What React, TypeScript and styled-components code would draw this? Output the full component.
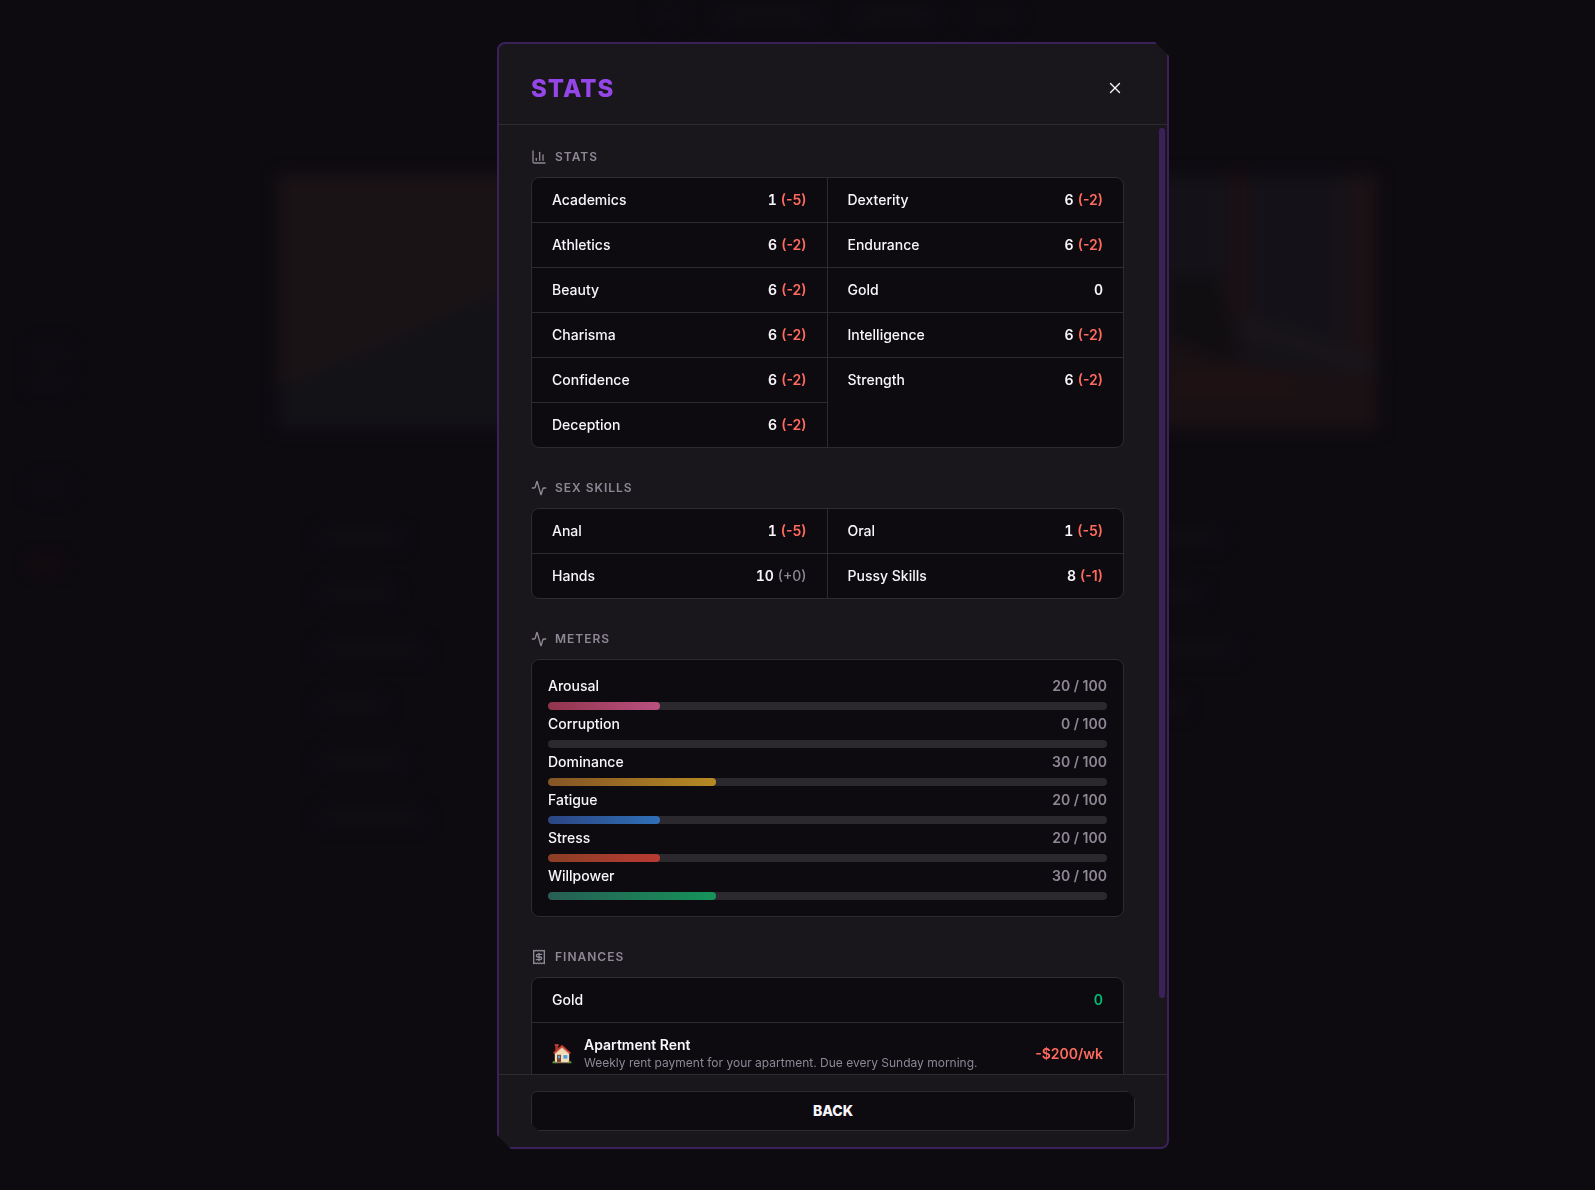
import React, { useEffect, useRef, useState } from 'react';
import type { ReactNode } from 'react';
import styled, { createGlobalStyle } from 'styled-components';
import { Activity, ChartColumn, X } from 'lucide-react';

const color = {
  page: '#0d0a10',
  surface: '#1a171c',
  inset: '#0d0a10',
  line: '#2d2a30',
  frame: '#3b2159',
  accent: '#9446e8',
  text: '#f8f6fa',
  muted: '#8e8895',
  bad: '#ff6b5e',
  good: '#00bf75',
  track: '#2b282e',
};

const GlobalStyle = createGlobalStyle`
  *, *::before, *::after { box-sizing: border-box; }
  html, body, #root { height: 100%; }
  body {
    margin: 0;
    overflow: hidden;
    background: ${color.page};
    color: ${color.text};
    font-family: Inter, "Liberation Sans", sans-serif;
    font-size: 14px;
    line-height: 20px;
  }
  h1, h2, p, ul { margin: 0; padding: 0; }
  ul { list-style: none; }
`;

/* ---------- blurred page behind the dialog ---------- */

const Backdrop = styled.div`
  position: fixed;
  inset: 0;
  display: grid;
  grid-template-columns: 278px minmax(0, 1fr) 217px;
  grid-template-rows: 174px minmax(0, 1fr);
  overflow: hidden;
  filter: blur(8px);
`;

const TopBar = styled.div`
  grid-column: 1 / -1;
  display: flex;
  justify-content: center;
  gap: 32px;
  padding: 8px 0 0 76px;
`;

const SideRail = styled.div`
  display: flex;
  flex-direction: column;
  gap: 16px;
  padding: 170px 0 0 28px;
`;

const RailGap = styled.div<{ $h: number }>`
  height: ${(p) => p.$h}px;
`;

const MainColumn = styled.div`
  display: flex;
  flex-direction: column;
`;

const Hero = styled.svg`
  display: block;
  width: 100%;
  height: 256px;
`;

const Choices = styled.div`
  display: flex;
  flex-direction: column;
  gap: 41px;
  padding: 100px 40px 0;
`;

const Smudge = styled.div<{ $w: number; $tone?: string }>`
  width: ${(p) => p.$w}px;
  height: 15px;
  border-radius: 8px;
  background: ${(p) => p.$tone ?? '#110f14'};
`;

const ChoicePair = styled.div`
  display: grid;
  grid-template-columns: 500px 1fr;
  gap: 16px;
`;

/* ---------- dialog ---------- */

const Overlay = styled.div`
  position: fixed;
  inset: 0;
  display: flex;
  align-items: center;
  justify-content: center;
  padding: 42px 0 41px 71px;
`;

const Dialog = styled.section`
  display: flex;
  flex-direction: column;
  width: 100%;
  max-width: 672px;
  max-height: 100%;
  border: 2px solid ${color.frame};
  border-radius: 8px;
  background: ${color.surface};
  overflow: hidden;
  clip-path: polygon(0 0, calc(100% - 14px) 0, 100% 14px, 100% 100%, 14px 100%, 0 calc(100% - 14px));
`;

const Header = styled.header`
  display: flex;
  align-items: center;
  justify-content: space-between;
  padding: 24px 32px 16px;
  border-bottom: 1px solid ${color.line};
`;

const Title = styled.h1`
  padding-top: 2px;
  color: ${color.accent};
  font-size: 24px;
  line-height: 32px;
  font-weight: 800;
  letter-spacing: 1px;
`;

const CloseButton = styled.button`
  display: grid;
  place-items: center;
  width: 40px;
  height: 40px;
  padding: 0;
  border: 0;
  background: none;
  color: ${color.text};
  cursor: pointer;
`;

const Body = styled.div`
  display: grid;
  grid-template-columns: minmax(0, 1fr) 10px;
  flex: 1 1 auto;
  min-height: 0;
`;

const Scroller = styled.div`
  display: flex;
  flex-direction: column;
  gap: 32px;
  min-height: 0;
  padding: 24px 33px 68px 32px;
  overflow-y: auto;
  scrollbar-width: none;
  & > * { flex-shrink: 0; }
`;

const ScrollTrack = styled.div`
  padding: 3px 2px;
`;

const ScrollThumb = styled.div`
  width: 6px;
  border-radius: 3px;
  background: ${color.frame};
`;

const Group = styled.section`
  display: flex;
  flex-direction: column;
  gap: 12px;
`;

const GroupTitle = styled.h2`
  display: flex;
  align-items: center;
  gap: 8px;
  color: ${color.muted};
  font-size: 12px;
  line-height: 16px;
  font-weight: 600;
  letter-spacing: 1px;
  text-transform: uppercase;
`;

const Card = styled.div`
  border: 1px solid ${color.line};
  border-radius: 8px;
  background: ${color.inset};
  overflow: hidden;
`;

const Columns = styled(Card)`
  display: grid;
  grid-template-columns: 1fr 1fr;
`;

const Column = styled.ul`
  &:not(:last-child) { border-right: 1px solid ${color.line}; }
`;

const Row = styled.li`
  display: flex;
  align-items: center;
  justify-content: space-between;
  padding: 12px 20px;
  & + & { border-top: 1px solid ${color.line}; }
`;

const Label = styled.span`
  font-size: 14px;
  font-weight: 500;
`;

const Value = styled.span<{ $tone?: string }>`
  display: flex;
  gap: 4px;
  font-weight: 600;
  color: ${(p) => p.$tone ?? color.text};
`;

const Score = styled.span`
  font-variant-numeric: tabular-nums;
`;

const Modifier = styled.span<{ $negative: boolean }>`
  font-weight: ${(p) => (p.$negative ? 600 : 500)};
  color: ${(p) => (p.$negative ? color.bad : color.muted)};
`;

const MeterCard = styled(Card)`
  display: flex;
  flex-direction: column;
  gap: 4px;
  padding: 16px;
`;

const MeterItem = styled.div`
  display: flex;
  flex-direction: column;
  gap: 6px;
`;

const MeterHead = styled.div`
  display: flex;
  justify-content: space-between;
`;

const MeterTrack = styled.div`
  height: 8px;
  border-radius: 4px;
  background: ${color.track};
  overflow: hidden;
`;

const MeterFill = styled.div<{ $from: string; $to: string }>`
  height: 100%;
  border-radius: 4px;
  background: linear-gradient(to right, ${(p) => p.$from}, ${(p) => p.$to});
`;

const Expense = styled.div`
  display: flex;
  align-items: center;
  gap: 12px;
`;

const ExpenseText = styled.div`
  display: flex;
  flex-direction: column;
`;

const ExpenseName = styled.span`
  font-weight: 600;
`;

const ExpenseNote = styled.span`
  padding-bottom: 2px;
  color: ${color.muted};
  font-size: 12px;
  line-height: 16px;
`;

const Footer = styled.footer`
  padding: 16px 32px;
  border-top: 1px solid ${color.line};
`;

const BackButton = styled.button`
  display: block;
  width: 100%;
  height: 40px;
  padding: 0;
  border: 1px solid ${color.line};
  border-radius: 6px;
  background: ${color.inset};
  color: ${color.text};
  font: inherit;
  font-weight: 800;
  cursor: pointer;
  clip-path: polygon(0 0, calc(100% - 8px) 0, 100% 8px, 100% 100%, 8px 100%, 0 calc(100% - 8px));
`;

/* ---------- drawings ---------- */

const ReceiptIcon = () => (
  <svg width="16" height="16" viewBox="0 0 24 24" fill="none" stroke="currentColor" strokeWidth="2" strokeLinecap="round" strokeLinejoin="round" aria-hidden="true">
    <path d="M4 2v20l2-1 2 1 2-1 2 1 2-1 2 1 2-1 2 1V2l-2 1-2-1-2 1-2-1-2 1-2-1-2 1Z" />
    <path d="M16 8h-6a2 2 0 1 0 0 4h4a2 2 0 1 1 0 4H8" />
    <path d="M12 17.5v-11" />
  </svg>
);

const HouseIcon = () => (
  <svg width="20" height="20" viewBox="0 0 20 20" role="img" aria-label="House">
    <path d="M3.2 0.6h3v6h-3z" fill="#a8352a" />
    <path d="M2.7 0.3h4v1.4h-4z" fill="#cf4a38" />
    <path d="M2.8 9 10 2.4 17.2 9v9.6H2.8z" fill="#f3ddb8" />
    <path d="M2.8 9.2 10 3l7.2 6.2v1.5L10 4.8 2.8 10.7z" fill="#c9a98a" opacity=".6" />
    <path d="M10 0.7 19 8.7l-1.2 1.4L10 3.3 2.2 10.1 1 8.7z" fill="#c93a2c" />
    <path d="M5 10.8h4v7.8H5z" fill="#7b4530" />
    <path d="M6 11.8h2v2.4H6z" fill="#5ba3d6" />
    <path d="M10.8 10.6h5.2v4.6h-5.2z" fill="#fff3df" />
    <path d="M11.3 11.1h4.2v3.6h-4.2z" fill="#4e9fe0" />
    <path d="M0.3 19.2c0-2 1.5-2.6 2.7-1.9 1 .5 1.3 1.2 1.2 1.9zM15.8 19.2c-.1-1 .5-1.7 1.4-2 1.3-.4 2.6.4 2.5 2z" fill="#5d8f35" />
    <path d="M3 18.3h14v.9H3z" fill="#9c8a6a" />
  </svg>
);

const HeroArt = () => (
  <Hero viewBox="0 0 1100 256" preserveAspectRatio="none" aria-hidden="true">
    <rect width="1100" height="256" fill="#141218" />
    <path d="M0 0h320v70L0 220z" fill="#1a1316" />
    <path d="M0 214 230 114v142H0z" fill="#131217" />
    <path d="M948 0h22v180h-22z" fill="#1a1014" />
    <path d="M1066 0h34v256h-34z" fill="#1a1215" />
    <path d="M890 100h50l20 60v30h-70z" fill="#110e12" />
    <path d="M880 160l60 30 160 10v56H880z" fill="#191114" />
    <path d="M890 200l70-10 60 14v20H890z" fill="#1e1113" />
    <path d="M960 140l140 44v20l-140-42z" fill="#19151a" />
  </Hero>
);

/* ---------- data ---------- */

type Stat = { name: string; value: number; mod?: number };
type Meter = { name: string; value: number; from: string; to: string };

const statColumns: Stat[][] = [
  [
    { name: 'Academics', value: 1, mod: -5 },
    { name: 'Athletics', value: 6, mod: -2 },
    { name: 'Beauty', value: 6, mod: -2 },
    { name: 'Charisma', value: 6, mod: -2 },
    { name: 'Confidence', value: 6, mod: -2 },
    { name: 'Deception', value: 6, mod: -2 },
  ],
  [
    { name: 'Dexterity', value: 6, mod: -2 },
    { name: 'Endurance', value: 6, mod: -2 },
    { name: 'Gold', value: 0 },
    { name: 'Intelligence', value: 6, mod: -2 },
    { name: 'Strength', value: 6, mod: -2 },
  ],
];

const skillColumns: Stat[][] = [
  [
    { name: 'Anal', value: 1, mod: -5 },
    { name: 'Hands', value: 10, mod: 0 },
  ],
  [
    { name: 'Oral', value: 1, mod: -5 },
    { name: 'Pussy Skills', value: 8, mod: -1 },
  ],
];

const meters: Meter[] = [
  { name: 'Arousal', value: 20, from: '#92344d', to: '#ba5180' },
  { name: 'Corruption', value: 0, from: '#5b2f8f', to: '#8744c9' },
  { name: 'Dominance', value: 30, from: '#845425', to: '#b68a24' },
  { name: 'Fatigue', value: 20, from: '#2c4583', to: '#2f70b8' },
  { name: 'Stress', value: 20, from: '#8b3f24', to: '#b93a34' },
  { name: 'Willpower', value: 30, from: '#275e54', to: '#15935a' },
];

const choiceWidths: [number, number][] = [
  [86, 390], [80, 370], [108, 406], [70, 354], [90, 0], [108, 0],
];

/* ---------- parts ---------- */

const StatTable = ({ columns }: { columns: Stat[][] }) => (
  <Columns>
    {columns.map((column, i) => (
      <Column key={i}>
        {column.map((s) => (
          <Row key={s.name}>
            <Label>{s.name}</Label>
            <Value>
              <Score>{s.value}</Score>
              {s.mod !== undefined && (
                <Modifier $negative={s.mod < 0}>{`(${s.mod < 0 ? s.mod : `+${s.mod}`})`}</Modifier>
              )}
            </Value>
          </Row>
        ))}
      </Column>
    ))}
  </Columns>
);

const Section = ({ icon, title, children }: { icon: ReactNode; title: string; children: ReactNode }) => (
  <Group>
    <GroupTitle>{icon}{title}</GroupTitle>
    {children}
  </Group>
);

const ScrollArea = ({ children }: { children: ReactNode }) => {
  const ref = useRef<HTMLDivElement>(null);
  const [thumb, setThumb] = useState({ top: 0, height: 0 });

  useEffect(() => {
    const el = ref.current;
    if (!el) return;
    const update = () => {
      const track = el.clientHeight - 6;
      setThumb({
        top: Math.round((el.scrollTop / el.scrollHeight) * track),
        height: el.scrollHeight > el.clientHeight ? Math.round((el.clientHeight / el.scrollHeight) * track) : 0,
      });
    };
    update();
    el.addEventListener('scroll', update);
    window.addEventListener('resize', update);
    return () => {
      el.removeEventListener('scroll', update);
      window.removeEventListener('resize', update);
    };
  }, []);

  return (
    <Body>
      <Scroller ref={ref}>{children}</Scroller>
      <ScrollTrack>
        <ScrollThumb style={{ height: thumb.height, marginTop: thumb.top }} />
      </ScrollTrack>
    </Body>
  );
};

export default function App() {
  return (
    <>
      <GlobalStyle />
      <Backdrop aria-hidden="true">
        <TopBar>
          <Smudge $w={30} $tone="#0f0d12" />
          <Smudge $w={104} />
          <Smudge $w={84} />
          <Smudge $w={50} $tone="#0f0d12" />
        </TopBar>
        <SideRail>
          <Smudge $w={44} $tone="#0f0d12" />
          <Smudge $w={44} $tone="#0f0d12" />
          <RailGap $h={58} />
          <Smudge $w={44} $tone="#0f0d12" />
          <RailGap $h={30} />
          <Smudge $w={36} $tone="#150c10" />
        </SideRail>
        <MainColumn>
          <HeroArt />
          <Choices>
            {choiceWidths.map(([left, right], i) => (
              <ChoicePair key={i}>
                <Smudge $w={left} />
                {right > 0 && <Smudge $w={right} />}
              </ChoicePair>
            ))}
          </Choices>
        </MainColumn>
      </Backdrop>
      <Overlay>
        <Dialog role="dialog" aria-modal="true" aria-labelledby="stats-title">
          <Header>
            <Title id="stats-title">STATS</Title>
            <CloseButton type="button" aria-label="Close"><X size={18} strokeWidth={1.8} /></CloseButton>
          </Header>
          <ScrollArea>
            <Section icon={<ChartColumn size={16} />} title="Stats">
              <StatTable columns={statColumns} />
            </Section>
            <Section icon={<Activity size={16} />} title="Sex Skills">
              <StatTable columns={skillColumns} />
            </Section>
            <Section icon={<Activity size={16} />} title="Meters">
              <MeterCard>
                {meters.map((m) => (
                  <MeterItem key={m.name}>
                    <MeterHead>
                      <Label>{m.name}</Label>
                      <Value $tone={color.muted}>{`${m.value} / 100`}</Value>
                    </MeterHead>
                    <MeterTrack role="meter" aria-label={m.name} aria-valuemin={0} aria-valuemax={100} aria-valuenow={m.value}>
                      <MeterFill $from={m.from} $to={m.to} style={{ width: `${m.value}%` }} />
                    </MeterTrack>
                  </MeterItem>
                ))}
              </MeterCard>
            </Section>
            <Section icon={<ReceiptIcon />} title="Finances">
              <Card as="ul">
                <Row>
                  <Label>Gold</Label>
                  <Value $tone={color.good}>0</Value>
                </Row>
                <Row>
                  <Expense>
                    <HouseIcon />
                    <ExpenseText>
                      <ExpenseName>Apartment Rent</ExpenseName>
                      <ExpenseNote>Weekly rent payment for your apartment. Due every Sunday morning.</ExpenseNote>
                    </ExpenseText>
                  </Expense>
                  <Value $tone={color.bad}>-$200/wk</Value>
                </Row>
              </Card>
            </Section>
          </ScrollArea>
          <Footer>
            <BackButton type="button">BACK</BackButton>
          </Footer>
        </Dialog>
      </Overlay>
    </>
  );
}
